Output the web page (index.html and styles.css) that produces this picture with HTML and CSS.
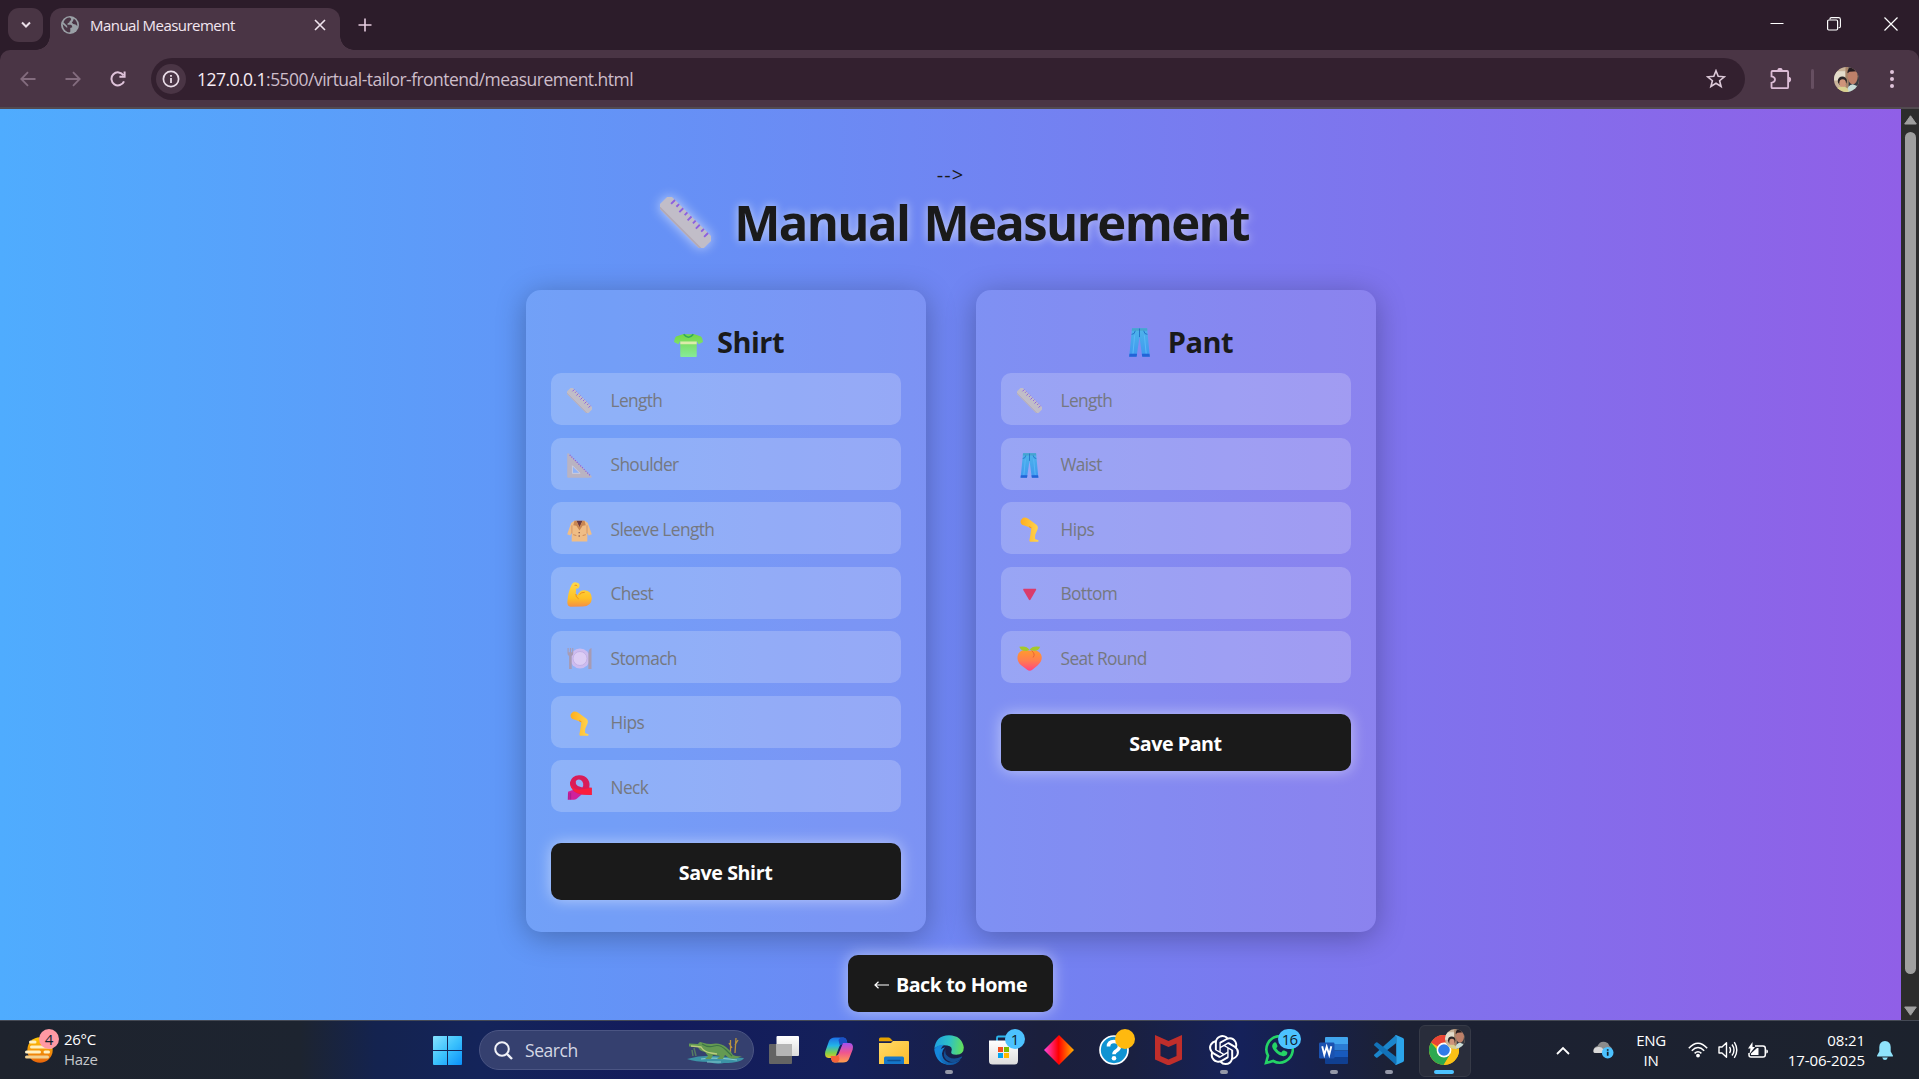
FILE: index.html
```html
<!DOCTYPE html>
<html lang="en">
<head>
<meta charset="utf-8">
<title>Manual Measurement</title>
<link rel="stylesheet" href="styles.css">
</head>
<body>
<svg class="defs" aria-hidden="true">
  <defs>
    <linearGradient id="g-skin" x1="0" y1="0" x2="0" y2="1"><stop offset="0" stop-color="#ffd94a"/><stop offset=".65" stop-color="#ffc124"/><stop offset="1" stop-color="#f58f45"/></linearGradient>
    <linearGradient id="g-leg" x1="0" y1="0" x2="1" y2="0"><stop offset="0" stop-color="#ffae1e"/><stop offset="1" stop-color="#ffd44f"/></linearGradient>
    <linearGradient id="g-jean" x1="0" y1="0" x2="0" y2="1"><stop offset="0" stop-color="#4fb4ea"/><stop offset="1" stop-color="#3d97f0"/></linearGradient>
    <linearGradient id="g-peach" x1="0" y1="0" x2="0" y2="1"><stop offset="0" stop-color="#ff9a2e"/><stop offset=".5" stop-color="#ff7f4d"/><stop offset="1" stop-color="#ff4580"/></linearGradient>
    <linearGradient id="g-tee" x1="0" y1="0" x2="0" y2="1"><stop offset="0" stop-color="#74d845"/><stop offset="1" stop-color="#86ea98"/></linearGradient>
    <linearGradient id="g-win" x1="0" y1="0" x2="1" y2="1"><stop offset="0" stop-color="#86e2ff"/><stop offset=".5" stop-color="#3cc2fd"/><stop offset="1" stop-color="#0a90fa"/></linearGradient>
    <linearGradient id="g-sun" x1="0" y1="0" x2="0" y2="1"><stop offset="0" stop-color="#ffc808"/><stop offset="1" stop-color="#e8650b"/></linearGradient>
    <linearGradient id="g-folder" x1="0" y1="0" x2="1" y2="1"><stop offset="0" stop-color="#ffdb67"/><stop offset="1" stop-color="#fcbb2b"/></linearGradient>
    <linearGradient id="g-dia" x1="0" y1="0" x2="1" y2="0"><stop offset="0" stop-color="#ff45e0"/><stop offset=".48" stop-color="#ff0000"/><stop offset="1" stop-color="#ffb000"/></linearGradient>
    <linearGradient id="g-edge1" x1="0" y1=".3" x2="1" y2=".4"><stop offset="0" stop-color="#1f9fe0"/><stop offset=".5" stop-color="#2dc0c8"/><stop offset="1" stop-color="#62e05a"/></linearGradient>
    <linearGradient id="g-edge2" x1="0" y1="0" x2="1" y2="1"><stop offset="0" stop-color="#1a8fe0"/><stop offset="1" stop-color="#0c4a96"/></linearGradient>
    <linearGradient id="g-cop1" x1="0" y1="0" x2="0" y2="1"><stop offset="0" stop-color="#1c6fe8"/><stop offset=".4" stop-color="#23b4e8"/><stop offset=".75" stop-color="#7fd04a"/><stop offset="1" stop-color="#e8c526"/></linearGradient>
    <linearGradient id="g-cop2" x1="0" y1="0" x2="0" y2="1"><stop offset="0" stop-color="#a450f0"/><stop offset=".5" stop-color="#f0568e"/><stop offset="1" stop-color="#ffa04c"/></linearGradient>
    <linearGradient id="g-white" x1="0" y1="0" x2="0" y2="1"><stop offset="0" stop-color="#fff"/><stop offset="1" stop-color="#dcdcdc"/></linearGradient>

    <symbol id="i-ruler" viewBox="0 0 24 24">
      <g transform="rotate(45 12 12)"><rect x="-2.6" y="8" width="29.2" height="8" rx="1" fill="#c1bdc8"/><path d="M-2 15.6H26" stroke="#b3a9b4" stroke-width=".8"/><path d="M1 8v2.600M3.750 8v1.800M6.500 8v2.600M9.250 8v1.800M12 8v2.600M14.750 8v1.800M17.500 8v2.600M20.250 8v1.800M23 8v2.600" stroke="#8d5fe0" stroke-width=".9"/></g>
    </symbol>
    <symbol id="i-square" viewBox="0 0 24 24">
      <path fill-rule="evenodd" d="M.2 1.200Q.2 0 1.400.3L23.400 22q.9 1.700-.6 1.800H1.200q-1 0-1-1zM5.200 12.200v7.300h7.300z" fill="#b9b3c2"/><path d="M5.200 12.200v7.300h7.300z" fill="none" stroke="#d9d5e2" stroke-width=".7"/><path d="M2.600 1.800 22 21.400" stroke="#8d5fe0" stroke-width="1.200" stroke-dasharray="1.1 1.3"/>
    </symbol>
    <symbol id="i-coat" viewBox="0 0 24 24">
      <path d="M7 3.600h10l3 2.200 3.800 10.700-3 1.300-1.300-3v8.600h-15v-8.600l-1.300 3-3-1.300L4 5.800z" fill="#f0bd85"/><path d="M4.700 8v8M19.200 8v8" stroke="#d08f62" stroke-width=".8"/><path d="M9 3.500h6L12 10z" fill="#6c3a3e"/><path d="M7.200 3.500 6 7.800l3 .6L12 13l3-4.600 3-.6-1.200-4.300L15 3.500 12 9.500 9 3.500z" fill="#c98652"/><circle cx="11.700" cy="15" r=".7" fill="#7b4b45"/><circle cx="11.700" cy="18.300" r=".7" fill="#7b4b45"/><path d="M6 17l3 .8M18 17l-3 .8" stroke="#c5804e" stroke-width=".8"/>
    </symbol>
    <symbol id="i-arm" viewBox="0 0 24 24">
      <path d="M4.500 2.500Q6-.4 9 .5q3.600.8 3 3.500-.5 2.500-3.200 2.400L8.400 11q1 1 1.600 2Q12 7.800 17 8q6.600.6 6.800 7.800Q23.600 23.200 15 23.500L3.400 23.800Q.3 23.500.3 19.500 1 9.500 4.500 2.500z" fill="url(#g-skin)"/><path d="M7.300 3.300q1.600-.9 2.600.6M8.500 11.500q-.4 3 2.700 4.700M12 12q2-2.500 5-2" fill="none" stroke="#e88a1f" stroke-width=".9"/>
    </symbol>
    <symbol id="i-plate" viewBox="0 0 24 24">
      <circle cx="12.500" cy="12" r="9.600" fill="#cdbcf0"/><circle cx="12.500" cy="12" r="6.700" fill="#dccdf5" stroke="#bba9e2" stroke-width=".7"/><path d="M.5 2v5q0 2.200 1.500 2.600V22h2.500V9.600Q6 9 6 7V2H5v4H3.900V2H2.800v4H1.600V2zM20.500 22V8q0-5 3-6v20z" fill="#a79bb4"/>
    </symbol>
    <symbol id="i-leg" viewBox="0 0 24 24">
      <path d="M4.600 1.800Q7-.7 10.500 1.500L19 7.700q1.600 1.600.7 4.300l-2.200 5-.2 4.200 3.200 1.200q.6 1.200-.4 1.300h-7.400q-1 0-.8-1.500l1-5.500.8-5.700-3.300-1.700L4.800 7.500Q2 4.500 4.600 1.800z" fill="url(#g-leg)"/><path d="M11.500 9.200l2.400 1.200" stroke="#e98b20" stroke-width=".8"/>
    </symbol>
    <symbol id="i-scarf" viewBox="0 0 24 24">
      <path d="M1 16q6-3 14-1l1 2-7 6q-1 .8-2.500.8H.7z" fill="#cf219c"/><path fill-rule="evenodd" d="M11.500.3Q17 0 20 4q2.500 3.700 1.300 8l2.400.3v7l-8.700-.6Q9 18 6 14.800 2.400 11 2.900 7 4.500.7 11.500.3zM12.800 4.500q-3.500-.9-4.400 1.800-.6 2.300 2 4.300l4.300 1.500Q16 10.500 15.500 8q-.7-2.800-2.700-3.500z" fill="#d91c58"/><path d="M2.900 7Q5 14 12 14.200l11.700-1.900v7l-8.700-.6Q3.500 17 2.900 7z" fill="#fc1d3c"/><path d="M1.800 17.500v6M3.500 17v6.600" stroke="#8f1a82" stroke-width=".6"/>
    </symbol>
    <symbol id="i-jeans" viewBox="0 0 24 24">
      <path d="M5.800.3h12.500l2.200 23.300h-6.300L12 7.500 9.600 23.600H3.500z" fill="url(#g-jean)"/><path d="M5.800.3h12.500l.2 2H5.600z" fill="#46a3cf"/><path d="M12 .5v7M5.500 5.300q2.500 0 3-3M18.500 5.300q-2.500 0-3-3" fill="none" stroke="#1f68c2" stroke-width=".7"/><path d="M3.700 21.400H10l-.4 2.400H3.400zM13.900 21.400h6.300l.4 2.400h-6.300z" fill="#2263d8"/><path d="M8 6 6.600 21M16 6l1.500 15" stroke="#5bb8f8" stroke-width=".8"/>
    </symbol>
    <symbol id="i-down" viewBox="0 0 24 24"><path d="M6.300 6.500h11.800q.6.400.2 1.200l-5.400 9.400q-.7.800-1.400 0L6 7.600q-.3-.8.300-1.100z" fill="#da3b6b"/></symbol>
    <symbol id="i-peach" viewBox="0 0 24 24">
      <path d="M12 4.500Q5 2.200 1.500 7-1.500 13.500 4 18.500q3 2.200 5.700 4.300 2.600 1.700 5 0l5-4Q25.500 13.600 23 8 19.500 2.500 12 4.500z" fill="url(#g-peach)"/><path d="M14 4.500q4 3 1.500 6.500" fill="none" stroke="#e85f36" stroke-width=".9"/><path d="M2.200.8Q9-.8 12 3.600 15-.8 22.200.8 20.500 5.500 15 4.400L12 3.600 9.300 4.800Q3.500 5 2.200.8z" fill="#a4c92a"/>
    </symbol>
    <symbol id="i-tee" viewBox="0 0 24 24">
      <path d="M7.300 3.500h9.600L22.300 5.300Q23.400 6 24 10l-3.600 1.700-1.600-2.500v12.500q0 .6-.6.600H5.800q-.6 0-.6-.6V9.200l-1.600 2.500L0 10Q.7 6 1.700 5.300z" fill="url(#g-tee)"/><path d="M5.200 9.500h13.600v2.300H5.200z" fill="#dcebaa"/><path d="M8 3.600q4 4.800 8 0" fill="none" stroke="#2fa95c" stroke-width="1.300"/>
    </symbol>
    <symbol id="i-photo" viewBox="0 0 24 24">
      <clipPath id="c-photo"><circle cx="12" cy="12" r="12"/></clipPath>
      <g clip-path="url(#c-photo)"><path fill="#c9b49a" d="M0 0h24v24H0z"/><path fill="#e3dccb" d="M0 4h11v9H0z"/><path fill="#a78469" d="M11 0h3v24h-3z"/><path fill="#35383f" d="M14 0h10v24H14z"/><ellipse cx="18" cy="9" rx="4.800" ry="7.500" fill="#bd8069"/><path d="M12.800 6q0-6 6-6 5.200 0 5.200 9l-2-5-7 .5z" fill="#241c20"/><path d="M12 24q1-7 6-7.500l6 2.500v5z" fill="#c8dcd8"/><circle cx="8" cy="13.500" r="4.400" fill="#2a2426"/><ellipse cx="8.300" cy="15.500" rx="3.200" ry="3.800" fill="#cf947a"/><path d="M1 24q1-5 7-5t6 5z" fill="#d9d08f"/></g>
    </symbol>
  </defs>
</svg>

<header class="browser">
  <div class="tabstrip">
    <div class="tab-search"><svg width="10" height="8" viewBox="0 0 10 8"><path d="M1 1.500 5 5.500 9 1.500" fill="none" stroke="#eadfe8" stroke-width="2"/></svg></div>
    <div class="tab">
      <svg class="favicon" width="18" height="18" viewBox="0 0 18 18"><circle cx="9" cy="9" r="9" fill="#9aa0a6"/><path d="M8.800 1.600Q11 2.800 9.600 4.600 8.500 5 8.300 6.600 6 6.800 6.500 8.800h3.200q1.600.3 1.600 2.400l-2 .8v3.700l-1.100.7Q4.400 15.800 2.500 12L1.600 8l4.600 4.100V10L2.400 6.200Q4.300 1.800 8.800 1.600zM12.800 2.800Q16.600 5 16.300 10l-1.800-1.400-2.300-.5-1.400-1.600L12 5z" fill="#4a3545"/></svg>
      <span class="tab-title">Manual Measurement</span>
      <svg class="tab-close" width="12" height="12" viewBox="0 0 12 12"><path d="M1 1 11 11M11 1 1 11" stroke="#f0e4ee" stroke-width="1.600"/></svg>
    </div>
    <svg class="new-tab" width="14" height="14" viewBox="0 0 14 14"><path d="M7 .5v13M.5 7h13" stroke="#e6cde0" stroke-width="1.600"/></svg>
    <div class="window-controls">
      <svg width="14" height="14" viewBox="0 0 14 14"><path d="M.5 6.500h13" stroke="#fff"/></svg>
      <svg width="14" height="14" viewBox="0 0 14 14"><rect x=".6" y="3" width="10" height="10" rx="1.200" fill="none" stroke="#fff" stroke-width="1.200"/><path d="M3 2.600V2q0-1.400 1.400-1.400h7.200q1.800 0 1.800 1.800v7.200q0 1.200-1.300 1.200h-.6" fill="none" stroke="#fff" stroke-width="1.100"/></svg>
      <svg width="14" height="14" viewBox="0 0 14 14"><path d="M.5.5l13 13M13.500.5l-13 13" stroke="#fff" stroke-width="1.200"/></svg>
    </div>
  </div>
  <div class="toolbar">
    <svg width="16" height="16" viewBox="0 0 16 16"><path d="M15.500 8H1.500M8 1.200 1.300 8 8 14.800" fill="none" stroke="#836c7e" stroke-width="1.800"/></svg>
    <svg width="16" height="16" viewBox="0 0 16 16"><path d="M.5 8h14M8 1.200 14.700 8 8 14.800" fill="none" stroke="#836c7e" stroke-width="1.800"/></svg>
    <svg width="16" height="16" viewBox="0 0 16 16"><path d="M14 10.300A6.500 6.500 0 1 1 13.400 4.300M14.600.5V5.700H9.400" fill="none" stroke="#dfc3da" stroke-width="2"/></svg>
    <div class="omnibox">
      <span class="site-info"><svg width="18" height="18" viewBox="0 0 18 18"><circle cx="9" cy="9" r="7.600" fill="none" stroke="#e9dce7" stroke-width="1.700"/><path d="M9 8v5M9 5v1.800" stroke="#e9dce7" stroke-width="1.800"/></svg></span>
      <span class="url"><b>127.0.0.1</b>:5500/virtual-tailor-frontend/measurement.html</span>
      <svg class="star" width="20" height="20" viewBox="0 0 20 20"><path d="M10 1.700 12.200 7.300 18.300 7.800 13.600 11.700 15.100 17.500 10 14.300 4.900 17.500 6.400 11.700 1.700 7.800 7.800 7.300z" fill="none" stroke="#dcc9d8" stroke-width="1.600"/></svg>
    </div>
    <svg class="puzzle" width="22" height="22" viewBox="0 0 22 22"><path d="M2.500 3h14.600q1 0 1 1v15.200q0 1-1 1H2.500q-1 0-1-1v-4.400q3.500-.6 3.500-3.200T1.500 8.400V4q0-1 1-1z" fill="none" stroke="#dcbdd6" stroke-width="1.800"/><path d="M7.300 2.500a2.700 2.700 0 0 1 5.400 0zM18.300 8.800a2.800 2.800 0 0 1 0 5.600z" fill="#dcbdd6"/></svg>
    <i class="divider"></i>
    <svg class="avatar" width="25" height="25"><use href="#i-photo"/></svg>
    <svg width="4" height="20" viewBox="0 0 4 20" class="dots"><g fill="#dfc3da"><circle cx="2" cy="3" r="2"/><circle cx="2" cy="10" r="2"/><circle cx="2" cy="17" r="2"/></g></svg>
  </div>
</header>

<div class="viewport">
  <main class="page">
    <p class="stray">--&gt;</p>
    <h1><svg width="51" height="51"><use href="#i-ruler"/></svg><span>Manual Measurement</span></h1>
    <div class="cards">
      <section class="card">
        <h2><svg width="29" height="29"><use href="#i-tee"/></svg><span>Shirt</span></h2>
        <div class="field"><svg><use href="#i-ruler"/></svg><span>Length</span></div>
        <div class="field"><svg><use href="#i-square"/></svg><span>Shoulder</span></div>
        <div class="field"><svg><use href="#i-coat"/></svg><span>Sleeve Length</span></div>
        <div class="field"><svg><use href="#i-arm"/></svg><span>Chest</span></div>
        <div class="field"><svg><use href="#i-plate"/></svg><span>Stomach</span></div>
        <div class="field"><svg><use href="#i-leg"/></svg><span>Hips</span></div>
        <div class="field"><svg><use href="#i-scarf"/></svg><span>Neck</span></div>
        <button class="btn">Save Shirt</button>
      </section>
      <section class="card">
        <h2 class="pant"><svg width="29" height="29"><use href="#i-jeans"/></svg><span>Pant</span></h2>
        <div class="field"><svg><use href="#i-ruler"/></svg><span>Length</span></div>
        <div class="field"><svg><use href="#i-jeans"/></svg><span>Waist</span></div>
        <div class="field"><svg><use href="#i-leg"/></svg><span>Hips</span></div>
        <div class="field"><svg><use href="#i-down"/></svg><span>Bottom</span></div>
        <div class="field"><svg><use href="#i-peach"/></svg><span>Seat Round</span></div>
        <button class="btn">Save Pant</button>
      </section>
    </div>
    <button class="btn home"><svg width="15" height="10" viewBox="0 0 15 10"><path d="M1 5h14M4.500 1.800 1 5l3.500 3.200" fill="none" stroke="#fff" stroke-width="1.200"/></svg><span>Back to Home</span></button>
  </main>
  <div class="scrollbar">
    <svg width="13" height="10" viewBox="0 0 13 10"><path d="M6.500.8 12.300 9H.7z" fill="#9f9f9f" stroke="#9f9f9f" stroke-linejoin="round"/></svg>
    <i class="thumb"></i>
    <svg width="13" height="10" viewBox="0 0 13 10"><path d="M6.500 9.200 12.300 1H.7z" fill="#9f9f9f" stroke="#9f9f9f" stroke-linejoin="round"/></svg>
  </div>
</div>

<footer class="taskbar">
  <div class="weather">
    <span class="sun"><svg width="30" height="26" viewBox="0 0 30 26"><circle cx="15" cy="13" r="12.700" fill="url(#g-sun)"/><g fill="#fff0c2"><rect x="4" y="3.500" width="7.500" height="3" rx="1.500"/><rect x="5" y="8.500" width="23" height="3" rx="1.500"/><rect x="0" y="13.500" width="16" height="3" rx="1.500"/><rect x="18.500" y="13.500" width="6.500" height="3" rx="1.500"/><rect x="0" y="18.500" width="24" height="3" rx="1.500" fill="#f3d08f"/></g></svg><b class="badge pink">4</b></span>
    <div class="weather-text"><span>26°C</span><span class="muted">Haze</span></div>
  </div>
  <div class="slot"><svg width="29" height="29" viewBox="0 0 29 29"><path d="M1 0h13v14H0V1q0-1 1-1zM15 0h13q1 0 1 1v13H15zM0 15h14v14H1q-1 0-1-1zM15 15h14v13q0 1-1 1H15z" fill="url(#g-win)"/></svg></div>
  <div class="search">
    <svg width="19" height="19" viewBox="0 0 19 19"><circle cx="8" cy="8" r="6.800" fill="none" stroke="#f1f2f8" stroke-width="2"/><path d="M13 13l5 5" stroke="#f1f2f8" stroke-width="2.400"/></svg>
    <span>Search</span>
    <svg class="croc" width="57" height="29" viewBox="0 0 57 29"><path d="M0 23q14-4 28-3t29 2q-3 5-20 5Q30 29 22 26 8 26 0 23z" fill="#3c93a6"/><path d="M14 23q14-2 36 1M20 26h14" stroke="#82c8c9" stroke-width="1.200" fill="none"/><path d="M43.500 16V4M48 17 49 2M45 12l-3-5M48 9l3-5" stroke="#b8923f" stroke-width="1.300"/><path d="M6 20l-1-6M9 20l-2-8" stroke="#557c63" stroke-width="1.500"/><path d="M2 7.500 11 8q1.500-3 4-1.500Q20 8 24 8q9-2 15 3 5 4 7 8 4 2 9 1-6 4-13 2l-4-3-2 4h-6l3-3-7-1-2 4h-6l3-3-3-4q-6-1-7-5L2 10.500z" fill="#649a52"/><path d="M4 10l10 1q3 5 10 6l6 1" fill="none" stroke="#bccb7c" stroke-width="1.400"/><path d="M15 8q6 4 12 2t12 4l6 6" fill="none" stroke="#3c7446" stroke-width="1.200"/></svg>
  </div>
  <div class="apps">
    <div class="slot"><svg width="30" height="28" viewBox="0 0 30 28"><rect y="8" width="23" height="20" rx="1" fill="#646464"/><rect x="7.500" width="22.500" height="20" rx="1" fill="url(#g-white)"/><path d="M7.500 8H23v12H7.500z" fill="#b5b5b5"/></svg></div>
    <div class="slot"><svg width="30" height="28" viewBox="0 0 30 28"><path d="M11 1.500h8.500q2.500.3 3.200 3l.8 3.500h-5q-2.500 0-3.300 2.800L11 22H4.500Q0 21.500 1.300 15.500L5 5q1.500-3.500 6-3.500z" fill="url(#g-cop1)"/><path d="M19 1.500q3 0 3.700 3l.8 3.500h-5q-1.800 0-2.700 1.500L14.500 4q.8-2.500 4.500-2.500z" fill="#1b4fc4"/><path d="M19 26.500h-8.500q-2.500-.3-3.200-3L6.700 20h4.800q2.500 0 3.300-2.800L19 7h6.500q4.500.5 3.200 6.500L25 23q-1.500 3.500-6 3.500z" fill="url(#g-cop2)"/><path d="M6.700 20h4.800q2 0 2.800-1.500L15.500 23q-.8 3.500-4 3.500-3.500 0-4.200-3z" fill="#f4623a"/></svg></div>
    <div class="slot"><svg width="30" height="27" viewBox="0 0 30 27"><path d="M0 2Q0 .5 1.500.5h8q1 0 2 1l2.500 2.700H0z" fill="#e5a100"/><path d="M0 6h12l2-2h15q1 0 1 1v22H0z" fill="url(#g-folder)"/><path d="M5 27v-6q0-1.500 1.500-1.500h17q1.500 0 1.500 1.500v6z" fill="#1577ca"/><path d="M9 23.500h12" stroke="#0e4f92" stroke-width="1.500" stroke-linecap="round"/></svg></div>
    <div class="slot on"><svg width="30" height="30" viewBox="0 0 30 30"><path d="M.3 14Q1.500.5 15 .2 28 .5 29.800 12.500q0 7-7.500 7.300-6 0-5-3 2-5.300-4-6.300Q4 9.500.3 14z" fill="url(#g-edge1)"/><path d="M.2 14.500Q3 9.500 10 9.800q-3.500 2.700-3.200 8.200Q8.500 28.500 17 29.800 2.500 30.300.2 14.500z" fill="#1587dc"/><path d="M11 12.200q-5 5-1.700 11 5.500 8 17.300 1.500Q22 30.300 15 29.900q-9-1.300-10-10Q5 13.500 11 12.200z" fill="url(#g-edge2)"/><path d="M11.500 14q-1.500 5 3.500 8.200 5.500 3 12.700-.7.900-.4.200.9-4.500 5.600-11 4.600-10.400-3.500-5.400-13z" fill="#154f93"/></svg></div>
    <div class="slot"><svg width="29" height="30" viewBox="0 0 29 30"><path d="M8 6V2.700Q8 1.500 9.300 1.500h10.400Q21 1.500 21 2.700V6" fill="none" stroke="#2cb5ee" stroke-width="1.800"/><path d="M0 5.500h29V26q0 3.500-3.500 3.500h-22Q0 29.500 0 26z" fill="url(#g-white)"/><path d="M9 12h5v5H9z" fill="#f25022"/><path d="M15 12h5v5h-5z" fill="#7fba00"/><path d="M9 18h5v5H9z" fill="#00a4ef"/><path d="M15 18h5v5h-5z" fill="#ffb900"/></svg><b class="badge blue">1</b></div>
    <div class="slot"><svg width="30" height="30" viewBox="0 0 30 30"><path d="M15 0 30 15 15 30 0 15z" fill="url(#g-dia)"/></svg></div>
    <div class="slot"><svg width="30" height="30" viewBox="0 0 30 30"><circle cx="15" cy="15" r="14" fill="#0f93d2" stroke="#fff" stroke-width="1.700"/><path d="M9.500 11.500Q9.500 6.500 15 6.500t5.500 4.800q0 2.700-3 4.400-2.500 1.500-2.500 3.500" fill="none" stroke="#fff" stroke-width="3.600"/><circle cx="15" cy="23.300" r="2.300" fill="#fff"/></svg><b class="badge amber"></b></div>
    <div class="slot"><svg width="27" height="30" viewBox="0 0 27 30"><path d="M0 0l13.500 6L27 0v24.500L13.500 30.500 0 24.500zM5.500 8.500v12.500L13.500 24.500 21.500 21V8.500L13.500 12z" fill-rule="evenodd" fill="#c02e2b"/></svg></div>
    <div class="slot on"><svg width="30" height="30" viewBox="0 0 24 24"><path fill="#fff" d="M22.280 9.820a5.980 5.980 0 0 0-.52-4.910 6.050 6.050 0 0 0-6.510-2.900A6.070 6.070 0 0 0 4.980 4.180a5.980 5.980 0 0 0-4 2.900 6.050 6.050 0 0 0 .74 7.100 5.980 5.980 0 0 0 .51 4.910 6.050 6.050 0 0 0 6.520 2.900A5.980 5.980 0 0 0 13.260 24a6.060 6.060 0 0 0 5.770-4.210 5.990 5.990 0 0 0 4-2.900 6.060 6.060 0 0 0-.75-7.070zm-9.020 12.610a4.480 4.480 0 0 1-2.880-1.040l.14-.08 4.780-2.760a.8.8 0 0 0 .39-.68v-6.740l2.020 1.170a.07.07 0 0 1 .04.05v5.580a4.500 4.500 0 0 1-4.490 4.500zm-9.660-4.130a4.470 4.470 0 0 1-.54-3.010l.14.090 4.780 2.760a.77.77 0 0 0 .78 0l5.840-3.370v2.330a.08.08 0 0 1-.03.06l-4.830 2.790a4.500 4.500 0 0 1-6.140-1.650zM2.340 7.900a4.490 4.490 0 0 1 2.370-1.970v5.670a.77.77 0 0 0 .39.680l5.810 3.350-2.020 1.170a.08.08 0 0 1-.07 0l-4.830-2.790A4.500 4.500 0 0 1 2.340 7.870zm16.600 3.860-5.840-3.390 2.020-1.160a.08.08 0 0 1 .07 0l4.830 2.790a4.490 4.490 0 0 1-.68 8.100v-5.680a.79.79 0 0 0-.4-.66zm2.010-3.020-.14-.09-4.770-2.780a.78.78 0 0 0-.79 0L9.410 9.230V6.900a.07.07 0 0 1 .03-.06l4.830-2.790a4.500 4.500 0 0 1 6.680 4.660zM8.310 12.860l-2.020-1.160a.08.08 0 0 1-.04-.06V6.070a4.500 4.500 0 0 1 7.380-3.450l-.14.080-4.780 2.760a.8.8 0 0 0-.39.68zm1.090-2.370 2.600-1.500 2.610 1.500v3l-2.600 1.500-2.610-1.500z"/></svg></div>
    <div class="slot"><svg width="30" height="30" viewBox="0 0 30 30"><path d="M2 28l2-7.300A13.200 13.200 0 1 1 9.300 26z" fill="none" stroke="#25d366" stroke-width="2.600"/><path d="M10.200 7.500q1.200-.5 2 .3l1.300 3.200q.1.800-1.300 2.200 1.700 3 5 4.400l1.700-2q.6-.4 1.400 0l3 1.500q.4 3.700-3.600 4.200-3.500.3-7.200-3.300-4.300-4-4.400-7 .2-2.500 2.100-3.500z" fill="#25d366"/></svg><b class="badge blue wide">16</b></div>
    <div class="slot on"><svg width="29" height="27" viewBox="0 0 29 27"><path d="M7 0h21q1 0 1 1v6H6V1q0-1 1-1z" fill="#41a5ee"/><path d="M6 7h23v6.500H6z" fill="#2b7cd3"/><path d="M6 13.500h23V20H6z" fill="#185abd"/><path d="M6 20h23v6q0 1-1 1H7q-1 0-1-1z" fill="#103f91"/><rect y="5.500" width="15.500" height="16" rx="1.200" fill="#1b52b0"/><path d="M3.200 9.300 5.300 17.700 7.700 9.800 10.200 17.700 12.300 9.300" fill="none" stroke="#fff" stroke-width="1.900"/></svg></div>
    <div class="slot on"><svg width="30" height="30" viewBox="0 0 30 30"><path d="M22 0v8.300L3.500 22.500q-.8.500-1.500 0L.4 21q-.7-.8 0-1.500z" fill="#1b86cc"/><path d="M22 30v-8.300L3.500 7.500Q2.700 7 2 7.500L.4 9q-.7.800 0 1.500z" fill="#1272b8"/><path d="M22 0l7 3q1 .5 1 1.700v20.600q0 1.200-1 1.700l-7 3-1.300-.6q1.500.5 1.500-1.400V2q0-1.900-1.500-1.400z" fill="#2ba4ea"/></svg></div>
    <div class="slot on active"><svg width="30" height="30" viewBox="0 0 30 30"><circle cx="15" cy="15" r="15" fill="#fbc116"/><path d="M15 15 2 7.500A15 15 0 0 1 28 7.500H15z" fill="#ea4335"/><path d="M15 15H8.500L2 7.500A15 15 0 0 0 14.500 30L21.500 18.700z" fill="#2da94f"/><path d="M15 30 21.500 18.700 21.500 7.500H28A15 15 0 0 1 15 30z" fill="#fbc116"/><circle cx="15" cy="15" r="7.400" fill="#fff"/><circle cx="15" cy="15" r="5.800" fill="#2f7bea"/></svg><svg class="badge-photo" width="20" height="20"><use href="#i-photo"/></svg></div>
  </div>
  <div class="tray">
    <svg class="caret" width="14" height="9" viewBox="0 0 14 9"><path d="M1 8 7 2l6 6" fill="none" stroke="#fff" stroke-width="1.800"/></svg>
    <svg class="cloud" width="21" height="18" viewBox="0 0 21 18"><path d="M1 12Q-1 7 4.500 5 7-.5 12.500 1q3 .7 4 4 3.500 1.500 2 7z" fill="#8b8b8b"/><path d="M.5 11Q0 6.500 5 6q4-.5 5 2l2 4H3Q.8 12 .5 11z" fill="#d8d8d8"/><circle cx="14.700" cy="11.700" r="5.800" fill="#4cc2ff"/><path d="M14.700 10.800v4M14.700 8.200v1.600" stroke="#12202b" stroke-width="1.700"/></svg>
    <div class="lang"><span>ENG</span><span>IN</span></div>
    <svg class="wifi" width="20" height="16" viewBox="0 0 20 16"><path d="M.8 6.200Q10-3.800 19.200 6.200M3.800 8.800q6.200-6.500 12.400 0M6.600 11.400q3.400-3.400 6.800 0" fill="none" stroke="#fff" stroke-width="1.500"/><circle cx="10" cy="13.600" r="1.900" fill="#fff"/></svg>
    <svg class="vol" width="20" height="18" viewBox="0 0 20 18"><path d="M1 6h3L8.500 1.800v14.400L4 12H1zM11.500 6q2 3 0 6M14 3.500q4 5.500 0 11M16.300 1.200q5 7.800 0 15.600" fill="none" stroke="#fff" stroke-width="1.400" stroke-linejoin="round"/></svg>
    <svg class="batt" width="20" height="17" viewBox="0 0 20 17"><path d="M7 4h8q2.300 0 2.300 2.300v6.400q0 2.300-2.300 2.300H3q-2 0-2-2V11" fill="none" stroke="#fff" stroke-width="1.500"/><path d="M9 6h1.500v7H3v-1.500zM18.300 7.500q1.700 0 1.700 2t-1.700 2z" fill="#fff"/><path d="M4.500 0 0 6.500h2.500L1.500 12 7 5H4.500z" fill="#fff"/></svg>
    <div class="clock"><span>08:21</span><span>17-06-2025</span></div>
    <svg class="bell" width="16" height="19" viewBox="0 0 16 19"><path d="M8 0q5.500.3 5.700 6v4.500l2.200 4q.3 1-.7 1H.8q-1 0-.7-1l2.200-4V6Q2.500.3 8 0zM5.200 16.500h5.600Q10 19 8 19t-2.800-2.500z" fill="#8fe3fb"/></svg>
  </div>
</footer>
</body>
</html>
```

FILE: styles.css
```css
* { box-sizing: border-box; margin: 0; padding: 0; }

body {
  width: 1919px;
  height: 1079px;
  overflow: hidden;
  display: flex;
  flex-direction: column;
  font-family: "Segoe UI", "Open Sans", "Noto Sans", sans-serif;
  color: #1a1a1a;
}

svg { display: block; flex: none; }
.defs { position: absolute; width: 0; height: 0; }

/* Browser chrome */
.browser { height: 109px; flex: none; background: #2c1c2a; }

.tabstrip { height: 50px; display: flex; align-items: flex-start; padding-left: 8px; }
.tab-search {
  width: 35px; height: 34px; margin-top: 8px; border-radius: 11px;
  background: #493544; display: flex; align-items: center; justify-content: center;
}
.tab {
  position: relative; width: 290px; height: 42px; margin: 8px 0 0 7px;
  padding: 0 14px 8px 11px; border-radius: 12px 12px 0 0;
  background: #4a3545; display: flex; align-items: center;
}
.tab::before, .tab::after {
  content: ""; position: absolute; bottom: 0; width: 14px; height: 14px;
}
.tab::before { left: -14px; background: radial-gradient(circle at 0 0, transparent 13.5px, #4a3545 14px); }
.tab::after { right: -14px; background: radial-gradient(circle at 100% 0, transparent 13.5px, #4a3545 14px); }
.tab-title { margin-left: 11px; font-size: 15px; letter-spacing: -.53px; color: #f3e6f0; white-space: nowrap; }
.tab-close { margin-left: auto; }
.new-tab { margin: 18px 0 0 18px; }
.window-controls { margin: 17px 21px 0 auto; display: flex; gap: 43px; }

.toolbar {
  height: 59px; padding: 1px 25px 0 20px; background: #4a3545;
  border-bottom: 2px solid #524a50; border-radius: 10px 10px 0 0;
  display: flex; align-items: center; gap: 29px;
}
.omnibox {
  width: 1597px; height: 42px; margin-left: -4px; padding: 0 19px 0 5px;
  border-radius: 21px; background: #33202f; display: flex; align-items: center;
}
.site-info {
  width: 30px; height: 30px; border-radius: 50%; background: #4a3545;
  display: flex; align-items: center; justify-content: center;
}
.url { margin-left: 11px; font-size: 17.5px; letter-spacing: -.53px; color: #cdbdca; white-space: nowrap; }
.url b { font-weight: 400; color: #f7ecf5; }
.star { margin-left: auto; }
.puzzle { margin-left: -4px; }
.divider { width: 3px; height: 20px; margin-left: -10px; border-radius: 2px; background: #664f61; }
.avatar { margin-left: -9px; }
.dots { margin-left: 2px; }

/* Web page */
.viewport { height: 911px; flex: none; display: flex; }
.page {
  width: 1901px; overflow: hidden;
  background: linear-gradient(to right, #4facfe, #905fe7);
  display: flex; flex-direction: column; align-items: center;
}
.stray { margin-top: 52px; height: 27px; line-height: 28px; font-size: 20px; letter-spacing: 1px; }
h1 {
  height: 68px; padding-left: 8px; display: flex; align-items: center; gap: 23px;
  font-size: 49px; line-height: 68px; letter-spacing: -1.6px; word-spacing: 3px; white-space: nowrap;
  text-shadow: 0 0 10px rgba(255, 255, 255, .6);
}
h1 svg { filter: drop-shadow(0 0 6px rgba(255, 255, 255, .6)); }
.cards { display: flex; gap: 50px; margin-top: 34px; }
.card {
  width: 400px; height: 642px; padding: 32px 25px 0; border-radius: 15px;
  background: rgba(255, 255, 255, .1); box-shadow: 0 5px 30px rgba(0, 0, 0, .28);
}
.card h2 {
  height: 39px; margin-bottom: 12px; padding-left: 7px; display: flex; align-items: center; justify-content: center; gap: 14px;
  font-size: 29px; line-height: 39px; letter-spacing: -.5px;
}
.card h2 svg { margin-top: 5px; }
.card h2.pant svg { margin-top: 2px; }
.field {
  height: 52px; margin-bottom: 12.5px; padding: 1px 0 0 16px; border-radius: 10px;
  background: rgba(255, 255, 255, .2); display: flex; align-items: center; gap: 19px;
  font-size: 17.3px; letter-spacing: -.6px; color: #757880;
}
.field svg { width: 25px; height: 25px; margin-top: 2px; }
.field span { padding-top: 1px; }
.btn {
  width: 350px; height: 57px; margin-top: 18px; padding-top: 2px; border: 0; border-radius: 10px;
  background: #1a1a1a; color: #fff; font: 700 19.7px/55px "Segoe UI", "Open Sans", "Noto Sans", sans-serif;
  letter-spacing: -.45px; box-shadow: 0 0 15px rgba(255, 255, 255, .5);
}
.home { width: 205px; margin-top: 23px; flex: none; display: flex; align-items: center; justify-content: center; gap: 7px; white-space: nowrap; }

.scrollbar {
  width: 18px; padding: 6px 0 4px; background: #2c2c2c;
  display: flex; flex-direction: column; align-items: center;
}
.thumb { width: 11px; height: 842px; margin: 7px 0 auto; border-radius: 6px; background: #9f9f9f; }

/* Taskbar */
.taskbar {
  height: 59px; flex: none; border-top: 1px solid #454a55; color: #fff;
  background: linear-gradient(to right, #1e232d 0, #1d2430 300px, #14234f 375px, #14245a 480px, #131b5c 660px, #14205a 850px, #1b1f3c 1040px, #1a2040 1130px, #15215a 1240px, #17204a 1310px, #1c2133 1400px, #1c222d 100%);
  display: flex; align-items: center; font-size: 15px; line-height: 20px; letter-spacing: -.3px;
}
.weather { width: 420px; padding-left: 25px; display: flex; align-items: center; }
.sun { position: relative; margin-top: -1px; }
.weather-text, .lang, .clock { display: flex; flex-direction: column; }
.weather-text { margin-left: 9px; margin-top: -2px; }
.muted { color: #c5c7cb; }
.slot { position: relative; width: 55px; height: 50px; flex: none; display: flex; align-items: center; justify-content: center; }
.search {
  width: 275px; height: 40px; margin: 0 2px 0 4px; padding: 0 9px 0 14px; border-radius: 20px;
  background: #35406f; border: 1px solid #4b5583; display: flex; align-items: center;
  font-size: 17.5px; color: #d4d7e4;
}
.search span { margin-left: 12px; letter-spacing: -.45px; }
.croc { margin-left: auto; }
.apps { display: flex; }
.badge {
  position: absolute; top: 4px; right: 6px; width: 20px; height: 20px; border-radius: 10px;
  font-size: 15px; font-weight: 400; line-height: 20px; text-align: center; color: #10202c;
}
.pink { background: #ff99a4; top: -8px; right: -4px; }
.blue { background: #4cc2ff; }
.amber { background: #ffb90f; }
.wide { width: 23px; right: 5px; letter-spacing: -.8px; }
.badge-photo { position: absolute; top: 4px; right: 6px; }
.on::after {
  content: ""; position: absolute; left: 50%; bottom: 1px; width: 8px; height: 4px;
  margin-left: -4px; border-radius: 2px; background: #9498a8;
}
.active::before {
  content: ""; position: absolute; left: 3px; top: 0; width: 50px; height: 50px;
  border-radius: 6px; border: 1px solid #363a47; background: #292d3b; z-index: -1;
}
.active { z-index: 0; }
.active::after { width: 20px; margin-left: -10px; background: #4cc2ff; }
.tray { margin: 0 26px 0 auto; display: flex; align-items: center; }
.cloud { margin-left: 23px; }
.lang { width: 40px; margin-left: 17px; margin-top: -1px; align-items: center; }
.wifi { margin-left: 17px; }
.vol, .batt { margin-left: 10px; }
.clock { width: 97px; margin-top: -1px; align-items: flex-end; letter-spacing: -.1px; }
.bell { margin-left: 12px; }
```
